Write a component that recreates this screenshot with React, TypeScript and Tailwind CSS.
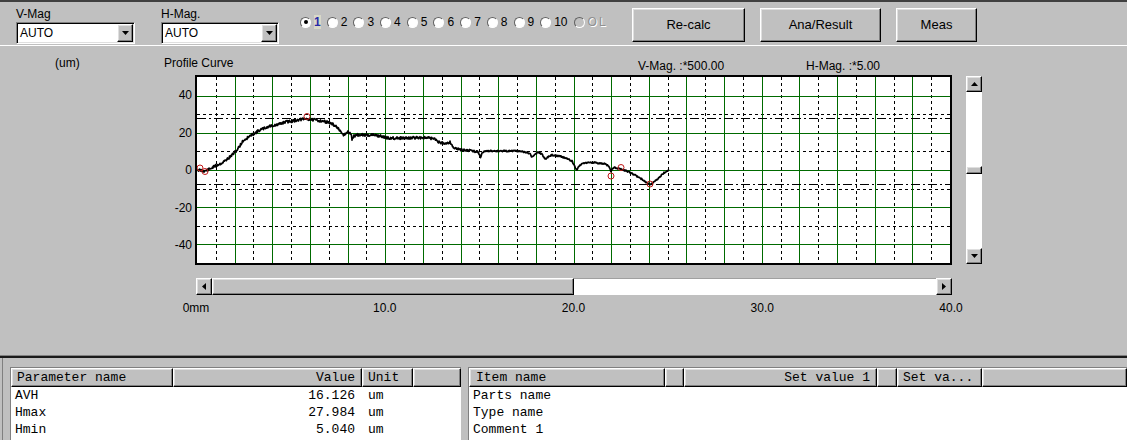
import React from "react"

// win95-ish bevels
const RAISED =
  "border border-t-white border-l-white border-r-black border-b-black shadow-[inset_-1px_-1px_0_#808080,inset_1px_1px_0_#dfdfdf]"
const SUNKEN =
  "border border-t-[#808080] border-l-[#808080] border-r-white border-b-white shadow-[inset_1px_1px_0_#000,inset_-1px_-1px_0_#dfdfdf]"

const PW = 753
const PH = 186
const yOf = (v: number) => ((50 - v) * PH) / 100

// profile trace, screen coords (plot inner starts at 197,77)
const KEY: [number, number][] = [
  [198, 170], [205, 171], [210, 169], [215, 166], [222, 163], [230, 157], [237, 150], [243, 141],
  [250, 136], [260, 130], [270, 126], [277, 125], [285, 122], [293, 121], [300, 119.5], [307, 119],
  [315, 120], [322, 121], [327, 122], [332, 124], [337, 127], [341, 133], [344, 135], [348, 132],
  [351, 134], [352, 139], [354, 136], [357, 135], [365, 135], [373, 135], [380, 136], [387, 138],
  [395, 138], [410, 138], [420, 137.5], [430, 138], [435, 139], [440, 143], [447, 143], [450, 142],
  [454, 148], [457, 149], [463, 150], [470, 150.5], [478, 151.5], [480.5, 158], [482, 153], [485, 151],
  [500, 151], [516, 151], [525, 152], [530, 154], [532, 157], [535, 154], [538, 152.5], [542, 154],
  [545, 159], [548, 157], [552, 155], [558, 156], [563, 157], [568, 159], [572, 161], [574, 165],
  [576.5, 170], [579, 166], [583, 163], [588, 162.5], [593, 162.5], [600, 163.5], [606, 164],
  [609, 167], [611, 171], [613, 168], [615, 167.5], [620, 169], [625, 170.5], [630, 172.5],
  [636, 175.5], [643, 180], [647, 183], [650, 184.5], [653, 183], [657, 179.5], [661, 175.5],
  [665, 172], [669, 170],
]

const TRACE = (() => {
  let seed = 11
  const rnd = () => {
    seed = (seed * 9301 + 49297) % 233280
    return seed / 233280
  }
  const pts: string[] = []
  for (let i = 0; i < KEY.length - 1; i++) {
    const [x0, y0] = KEY[i]
    const [x1, y1] = KEY[i + 1]
    const steps = Math.max(1, Math.round((x1 - x0) * 2))
    for (let s = 0; s < steps; s++) {
      const t = s / steps
      const amp = x0 < 480 ? 2.6 : 1.4
      const x = x0 + (x1 - x0) * t
      const y = y0 + (y1 - y0) * t + (rnd() - 0.5) * amp
      pts.push(`${(x - 197).toFixed(1)},${(y - 77).toFixed(1)}`)
    }
  }
  const [lx, ly] = KEY[KEY.length - 1]
  pts.push(`${lx - 197},${ly - 77}`)
  return pts.join(" ")
})()

const MARKS: [number, number][] = [
  [200, 168], [205, 171.5], [307, 116.5], [611, 176], [621, 167.5], [650, 184],
]

function ArrowDown() {
  return (
    <svg width="7" height="4" viewBox="0 0 7 4">
      <path d="M0 0h7L3.5 4z" fill="#000" />
    </svg>
  )
}
function ArrowUp() {
  return (
    <svg width="7" height="4" viewBox="0 0 7 4">
      <path d="M0 4h7L3.5 0z" fill="#000" />
    </svg>
  )
}
function ArrowLeft() {
  return (
    <svg width="4" height="7" viewBox="0 0 4 7">
      <path d="M4 0v7L0 3.5z" fill="#000" />
    </svg>
  )
}
function ArrowRight() {
  return (
    <svg width="4" height="7" viewBox="0 0 4 7">
      <path d="M0 0v7L4 3.5z" fill="#000" />
    </svg>
  )
}

function Combo({ label, width }: { label: string; width: string }) {
  return (
    <div className={`shrink-0 flex flex-col pt-[5px] ${width}`}>
      <span className="h-[14px] leading-[14px]">{label}</span>
      <div className={`mt-[1px] h-[22px] bg-white flex items-center p-[1px] ${SUNKEN}`}>
        <span className="flex-1 pl-[2px] leading-[14px]">AUTO</span>
        <span className={`w-[16px] h-[18px] bg-[#c0c0c0] flex items-center justify-center ${RAISED}`}>
          <ArrowDown />
        </span>
      </div>
    </div>
  )
}

function Radio({ label, checked, disabled }: { label: string; checked?: boolean; disabled?: boolean }) {
  return (
    <div className="shrink-0 flex items-center gap-[3px] mr-[6px]">
      <span
        className={`w-[11px] h-[11px] rounded-full flex items-center justify-center border border-t-[#606060] border-l-[#606060] border-r-white border-b-white ${
          disabled ? "bg-[#c0c0c0]" : "bg-white"
        }`}
      >
        {checked && <span className="w-[4px] h-[4px] rounded-full bg-black" />}
      </span>
      {checked ? (
        <span className="font-bold text-[#2a2aa8] bg-[#d8d8c8] leading-[14px]">{label}</span>
      ) : disabled ? (
        <span className="text-[#909090] [text-shadow:1px_1px_0_#fff] leading-[14px] tracking-[2px]">{label}</span>
      ) : (
        <span className="leading-[14px]">{label}</span>
      )}
    </div>
  )
}

function Plot() {
  const cols = Array.from({ length: 20 }, (_, k) => k)
  return (
    <div className="w-[757px] h-[190px] border-2 border-black bg-white">
      <svg width={PW} height={PH} viewBox={`0 0 ${PW} ${PH}`} className="block">
        {/* minor dashed grid */}
        {cols.map((k) => {
          const x = Math.round(((k + 0.5) * PW) / 20) + 0.5
          return <line key={`mv${k}`} x1={x} y1={0} x2={x} y2={PH} stroke="#000" strokeWidth={1} strokeDasharray="3 3" />
        })}
        {[30, 10, -10, -30].map((v) => {
          const y = Math.round(yOf(v)) + 0.5
          return <line key={`mh${v}`} x1={0} y1={y} x2={PW} y2={y} stroke="#000" strokeWidth={1} strokeDasharray="3 3" />
        })}
        {/* major grid */}
        {cols.slice(1).map((k) => {
          const x = Math.round((k * PW) / 20) + 0.5
          return <line key={`v${k}`} x1={x} y1={0} x2={x} y2={PH} stroke="#006a00" strokeWidth={1} />
        })}
        {[40, 20, 0, -20, -40].map((v) => {
          const y = Math.round(yOf(v)) + 0.5
          return <line key={`h${v}`} x1={0} y1={y} x2={PW} y2={y} stroke="#006a00" strokeWidth={1} />
        })}
        {/* reference levels */}
        {[28, -7.5].map((v) => {
          const y = Math.round(yOf(v)) + 0.5
          return <line key={`r${v}`} x1={0} y1={y} x2={PW} y2={y} stroke="#000" strokeWidth={1} strokeDasharray="9 3 2 3" />
        })}
        <polyline points={TRACE} fill="none" stroke="#000" strokeWidth={1.7} strokeLinejoin="round" />
        {MARKS.map(([x, y], i) => (
          <circle key={i} cx={x - 197} cy={y - 77} r={3} fill="none" stroke="#c01818" strokeWidth={1} />
        ))}
      </svg>
    </div>
  )
}

const LEFT_COLS = [
  { w: "w-[162px]", head: "Parameter name", align: "pl-[5px]" },
  { w: "w-[189px]", head: "Value", align: "justify-end pr-[6px]" },
  { w: "w-[51px]", head: "Unit", align: "pl-[5px]" },
]

const LEFT_ROWS = [
  ["AVH", "16.126", "um"],
  ["Hmax", "27.984", "um"],
  ["Hmin", "5.040", "um"],
]

const RIGHT_COLS = [
  { w: "w-[196px]", head: "Item name", align: "pl-[6px]" },
  { w: "w-[19px]", head: "", align: "" },
  { w: "w-[193px]", head: "Set value 1", align: "justify-end pr-[6px]" },
  { w: "w-[20px]", head: "", align: "" },
  { w: "w-[85px]", head: "Set va...", align: "pl-[5px]" },
]

const RIGHT_ROWS = ["Parts name", "Type name", "Comment 1"]

export default function App() {
  return (
    <div className="w-[1127px] h-[440px] overflow-hidden bg-[#c0c0c0] text-black text-[12px] font-['Liberation_Sans',Arial,sans-serif] flex flex-col">
      <div className="h-[2px] bg-[#404040] shrink-0" />

      {/* toolbar */}
      <div className="h-[43px] shrink-0 flex items-start pl-[16px] pr-[150px]">
        <Combo label="V-Mag" width="w-[119px]" />
        <div className="ml-[26px] shrink-0">
          <Combo label="H-Mag." width="w-[118px]" />
        </div>
        <div className="ml-[21px] mt-[13px] h-[14px] shrink-0 flex items-center">
          <Radio label="1" checked />
          {["2", "3", "4", "5", "6", "7", "8", "9", "10"].map((n) => (
            <Radio key={n} label={n} />
          ))}
          <Radio label="OL" disabled />
        </div>
        <div className="ml-auto mt-[6px] shrink-0 flex gap-[15px] text-[13px]">
          <button className={`w-[113px] h-[34px] bg-[#c0c0c0] ${RAISED}`}>Re-calc</button>
          <button className={`w-[121px] h-[34px] bg-[#c0c0c0] ${RAISED}`}>Ana/Result</button>
          <button className={`w-[81px] h-[34px] bg-[#c0c0c0] ${RAISED}`}>Meas</button>
        </div>
      </div>
      <div className="h-[1px] bg-white shrink-0" />

      {/* chart */}
      <div className="h-[309px] shrink-0 flex flex-col">
        <div className="h-[29px] flex items-start pl-[55px] leading-[14px]">
          <span className="w-[109px] mt-[10px]">(um)</span>
          <span className="w-[474px] mt-[10px]">Profile Curve</span>
          <span className="w-[168px] mt-[13px]">V-Mag. :*500.00</span>
          <span className="mt-[13px]">H-Mag. :*5.00</span>
        </div>
        <div className="flex items-start">
          <div className="w-[195px] h-[190px] pr-[3px] pt-[13px] pb-[13px] flex flex-col justify-between items-end">
            {["40", "20", "0", "-20", "-40"].map((l) => (
              <span key={l} className="h-[14px] leading-[14px]">
                {l}
              </span>
            ))}
          </div>
          <div className="w-[757px] flex flex-col">
            <Plot />
            <div className="mt-[13px] ml-[1px] w-[756px] h-[17px] flex">
              <span className={`w-[16px] h-[17px] bg-[#c0c0c0] flex items-center justify-center ${RAISED}`}>
                <ArrowLeft />
              </span>
              <span className={`w-[362px] h-[17px] bg-[#c0c0c0] ${RAISED}`} />
              <span className="flex-1 h-[17px] bg-white border-t border-[#a0a0a0]" />
              <span className={`w-[16px] h-[17px] bg-[#c0c0c0] flex items-center justify-center ${RAISED}`}>
                <ArrowRight />
              </span>
            </div>
            <div className="mt-[6px] ml-[1px] w-[755px] h-[14px] flex justify-between leading-[14px]">
              {["0mm", "10.0", "20.0", "30.0", "40.0"].map((l) => (
                <span key={l} className="w-0 flex justify-center whitespace-nowrap">
                  {l}
                </span>
              ))}
            </div>
          </div>
          <div className="ml-[14px] mt-[1px] w-[16px] h-[188px] flex flex-col">
            <span className={`h-[16px] bg-[#c0c0c0] flex items-center justify-center ${RAISED}`}>
              <ArrowUp />
            </span>
            <span className="h-[74px] bg-white" />
            <span className={`h-[8px] bg-[#c0c0c0] ${RAISED}`} />
            <span className="flex-1 bg-white" />
            <span className={`h-[16px] bg-[#c0c0c0] flex items-center justify-center ${RAISED}`}>
              <ArrowDown />
            </span>
          </div>
        </div>
      </div>

      {/* result lists */}
      <div className="h-[1px] bg-[#808080] shrink-0" />
      <div className="h-[2px] bg-[#1a1a1a] shrink-0" />
      <div className="flex-1 ml-[2px] border-l border-[#808080] pt-[9px] pl-[7px] flex gap-[7px] font-['Liberation_Mono','Courier_New',monospace] text-[13px]">
        <div className="w-[451px] h-[120px] bg-white border-l border-t border-[#808080]">
          <div className="h-[19px] flex bg-[#c0c0c0]">
            {LEFT_COLS.map((c) => (
              <div key={c.head} className={`${c.w} h-[19px] flex items-center ${c.align} ${RAISED}`}>
                {c.head}
              </div>
            ))}
            <div className={`flex-1 h-[19px] ${RAISED}`} />
          </div>
          {LEFT_ROWS.map((r) => (
            <div key={r[0]} className="h-[17px] flex items-center">
              <span className="w-[162px] pl-[4px]">{r[0]}</span>
              <span className="w-[189px] text-right pr-[7px]">{r[1]}</span>
              <span className="w-[51px] pl-[6px]">{r[2]}</span>
            </div>
          ))}
        </div>
        <div className="flex-1 h-[120px] bg-white border-l border-t border-[#808080]">
          <div className="h-[19px] flex bg-[#c0c0c0]">
            {RIGHT_COLS.map((c, i) => (
              <div key={i} className={`${c.w} h-[19px] flex items-center ${c.align} ${RAISED}`}>
                {c.head}
              </div>
            ))}
            <div className={`flex-1 h-[19px] ${RAISED}`} />
          </div>
          {RIGHT_ROWS.map((r) => (
            <div key={r} className="h-[17px] flex items-center pl-[4px]">
              {r}
            </div>
          ))}
        </div>
      </div>
    </div>
  )
}
